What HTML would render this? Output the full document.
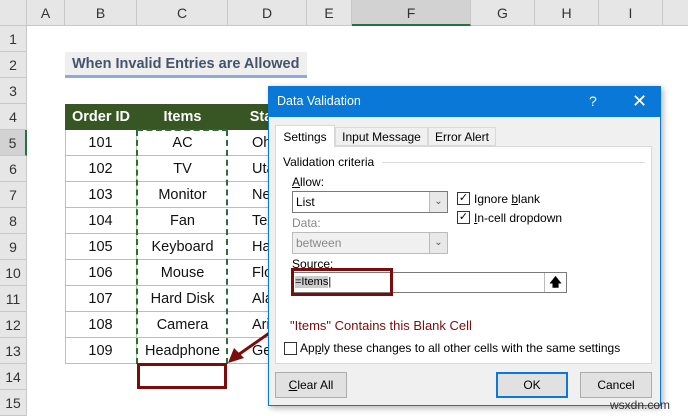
<!DOCTYPE html>
<html><head><style>
*{margin:0;padding:0;box-sizing:border-box}
body{width:688px;height:416px;overflow:hidden;background:#fff;font-family:"Liberation Sans",sans-serif;position:relative}
.a{position:absolute}
.ch{position:absolute;top:0;height:26px;background:#e6e6e6;border-right:1px solid #c8c8c8;border-bottom:1px solid #c8c8c8;font-size:14px;color:#333;text-align:center;line-height:26px}
.rh{position:absolute;left:0;width:27px;height:26px;background:#e6e6e6;border-bottom:1px solid #c8c8c8;border-right:1px solid #c8c8c8;font-size:14px;color:#333;text-align:center;line-height:26px}
.c{position:absolute;height:26px;font-size:14.5px;color:#111;text-align:center;line-height:26px;border-bottom:1px solid #a9d08e}
.d{font-size:12px;color:#000}
.btn{position:absolute;height:26px;background:#e1e1e1;border:1px solid #adadad;font-size:12px;text-align:center;line-height:24px}
.sel{position:absolute;height:22px;border:1px solid #7a7a7a;background:#fff;font-size:12px;line-height:20px;padding-left:3px}
.arr{position:absolute;right:0;top:0;width:18px;height:20px;border-left:1px solid #bbb;background:#e8e8e8;text-align:center;font-size:10px;color:#555}
.cb{position:absolute;width:13px;height:13px;border:1px solid #333;background:#fff;font-size:11px;line-height:11px;text-align:center}
</style></head><body>
<div class="ch" style="left:0;width:27px"></div>
<div class="ch" style="left:27px;width:38px">A</div>
<div class="ch" style="left:65px;width:72px">B</div>
<div class="ch" style="left:137px;width:91px">C</div>
<div class="ch" style="left:228px;width:79px">D</div>
<div class="ch" style="left:307px;width:45px">E</div>
<div class="ch" style="left:352px;width:119px;background:#d2d2d2;border-bottom:2px solid #217346">F</div>
<div class="ch" style="left:471px;width:64px">G</div>
<div class="ch" style="left:535px;width:64px">H</div>
<div class="ch" style="left:599px;width:64px">I</div>
<div class="ch" style="left:663px;width:25px;border-right:none"></div>
<div class="rh" style="top:26px">1</div><div class="rh" style="top:52px">2</div><div class="rh" style="top:78px">3</div><div class="rh" style="top:104px">4</div>
<div class="rh" style="top:130px;background:#d2d2d2;border-right:2px solid #217346">5</div>
<div class="rh" style="top:156px">6</div><div class="rh" style="top:182px">7</div><div class="rh" style="top:208px">8</div><div class="rh" style="top:234px">9</div><div class="rh" style="top:260px">10</div><div class="rh" style="top:286px">11</div><div class="rh" style="top:312px">12</div><div class="rh" style="top:338px">13</div><div class="rh" style="top:364px">14</div><div class="rh" style="top:390px">15</div>

<div class="a" style="left:65px;top:52px;width:242px;height:26px;background:#efefef;border-bottom:3px solid #8ea9db;font-weight:bold;font-size:14.5px;color:#44546a;line-height:24px;padding-left:7px">When Invalid Entries are Allowed</div>

<div class="a" style="left:65px;top:104px;width:242px;height:26px;background:#375623"></div>
<div class="c" style="left:65px;top:104px;width:72px;color:#fff;font-weight:bold;border:none">Order ID</div>
<div class="c" style="left:137px;top:104px;width:91px;color:#fff;font-weight:bold;border:none">Items</div>
<div class="c" style="left:228px;top:104px;width:79px;color:#fff;font-weight:bold;border:none">State</div>
<div class="a" style="left:65px;top:130px;width:1px;height:234px;background:#a9d08e"></div>
<div id="rows"></div>
<div class="a" style="left:136px;top:130px;width:3px;height:234px;border-left:2px dashed #2e6b3e"></div>
<div class="a" style="left:226px;top:130px;width:3px;height:234px;border-left:2px dashed #2e6b3e"></div>
<div class="a" style="left:137px;top:129px;width:91px;height:2px;border-top:2px dashed #2e6b3e"></div>
<div class="a" style="left:137px;top:363px;width:90px;height:26px;border:3px solid #7a0c0c"></div>

<svg class="a" style="left:0;top:0" width="688" height="416"><line x1="325" y1="294" x2="238" y2="355" stroke="#7a0c0c" stroke-width="3"/><polygon points="228,363 234,348 244,358" fill="#7a0c0c"/></svg>

<div class="a" style="left:268px;top:86px;width:393px;height:320px;background:#f0f0f0;border:1px solid #0a78d7;box-shadow:2px 2px 6px rgba(0,0,0,.3)"></div>
<div class="a" style="left:268px;top:86px;width:393px;height:31px;background:#0a78d7;color:#fff;font-size:12.5px;line-height:31px;padding-left:9px">Data Validation<span class="a" style="left:321px;top:0;font-size:14px">?</span><span class="a" style="left:364px;top:0;font-size:18px">✕</span></div>
<div class="a" style="left:275px;top:146px;width:377px;height:218px;background:#fff;border:1px solid #d9d9d9"></div>
<div class="a d" style="left:275px;top:125px;width:60px;height:22px;background:#fff;border:1px solid #d9d9d9;border-bottom:none;text-align:center;line-height:22px">Settings</div>
<div class="a d" style="left:335px;top:127px;width:93px;height:19px;background:#f0f0f0;border:1px solid #d9d9d9;text-align:center;line-height:19px">Input Message</div>
<div class="a d" style="left:428px;top:127px;width:68px;height:19px;background:#f0f0f0;border:1px solid #d9d9d9;text-align:center;line-height:19px">Error Alert</div>
<div class="a d" style="left:283px;top:155px">Validation criteria</div>
<div class="a" style="left:382px;top:162px;width:263px;height:1px;background:#ddd"></div>
<div class="a d" style="left:292px;top:175px"><u>A</u>llow:</div>
<div class="sel" style="left:292px;top:191px;width:156px">List<div class="arr">&#8964;</div></div>
<div class="a d" style="left:292px;top:216px;color:#888">Data:</div>
<div class="sel" style="left:292px;top:232px;width:156px;background:#f0f0f0;border-color:#bbb;color:#888">between<div class="arr">&#8964;</div></div>
<div class="cb" style="left:457px;top:192px">✓</div><div class="a d" style="left:474px;top:192px">Ignore <u>b</u>lank</div>
<div class="cb" style="left:457px;top:211px">✓</div><div class="a d" style="left:474px;top:211px"><u>I</u>n-cell dropdown</div>
<div class="a d" style="left:292px;top:257px"><u>S</u>ource:</div>
<div class="sel" style="left:291px;top:272px;width:276px;height:21px;font-size:11px;line-height:19px"><span style="background:#ccc">=Items</span>|<div class="arr" style="width:22px;height:19px;background:#fff;color:#000;font-size:12px;font-weight:bold">🡅</div></div>
<div class="a" style="left:291px;top:268px;width:102px;height:28px;border:3px solid #7a0c0c"></div>
<div class="a" style="left:290px;top:318px;font-size:13px;color:#7a0c0c">"Items" Contains this Blank Cell</div>
<div class="cb" style="left:284px;top:342px"></div><div class="a d" style="left:300px;top:341px">Ap<u>p</u>ly these changes to all other cells with the same settings</div>
<div class="btn" style="left:275px;top:372px;width:72px"><u>C</u>lear All</div>
<div class="btn" style="left:496px;top:372px;width:72px;border:2px solid #0a78d7;line-height:22px">OK</div>
<div class="btn" style="left:580px;top:372px;width:72px">Cancel</div>
<div class="a" style="left:610px;top:398px;font-size:12px;color:#333">wsxdn.com</div>
<script>
var d=[["101","AC","Ohio"],["102","TV","Utah"],["103","Monitor","Nevada"],["104","Fan","Texas"],["105","Keyboard","Hawaii"],["106","Mouse","Florida"],["107","Hard Disk","Alaska"],["108","Camera","Arizona"],["109","Headphone","Georgia"]],h="";
d.forEach(function(r,i){var t=130+i*26;h+='<div class="c" style="left:65px;top:'+t+'px;width:72px;border-right:1px solid #a9d08e">'+r[0]+'</div><div class="c" style="left:137px;top:'+t+'px;width:91px">'+r[1]+'</div><div class="c" style="left:228px;top:'+t+'px;width:79px;text-align:left;padding-left:24px;overflow:hidden;white-space:nowrap">'+r[2]+'</div>';});
document.getElementById("rows").outerHTML=h;
</script>
</body></html>
